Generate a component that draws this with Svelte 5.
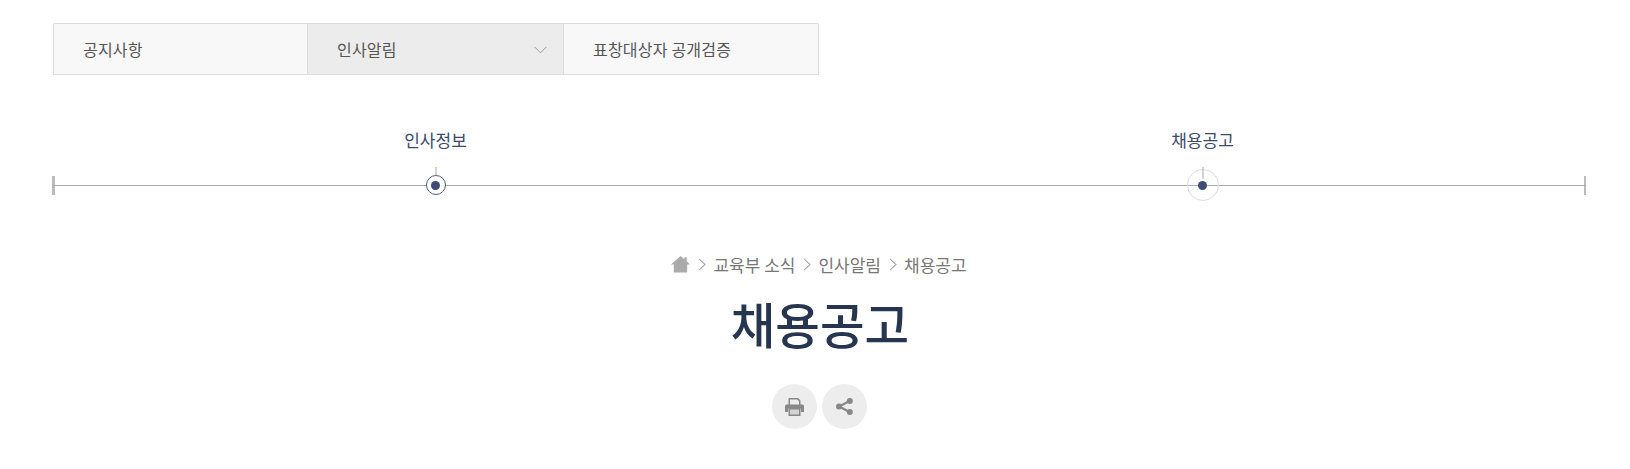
<script>
	const tabs = [
		{ label: '공지사항' },
		{ label: '인사알림', active: true },
		{ label: '표창대상자 공개검증' }
	];
	const steps = [
		{ label: '인사정보', current: true },
		{ label: '채용공고' }
	];
	const crumbs = ['교육부 소식', '인사알림', '채용공고'];
</script>

<div class="page">
	<nav class="tabs">
		{#each tabs as tab}
			<a class="tab" class:active={tab.active} href="#top">
				{tab.label}
				{#if tab.active}
					<svg class="caret" width="13" height="8" viewBox="0 0 13 8" fill="none">
						<path d="M.5.8 6.500 6.800 12.500.8" stroke="#999" />
					</svg>
				{/if}
			</a>
		{/each}
	</nav>

	<div class="timeline">
		{#each steps as step}
			<div class="step">
				<span class="step-label">{step.label}</span>
				<div class="slot">
					<span class="node" class:current={step.current}><i></i></span>
				</div>
			</div>
		{/each}
	</div>

	<div class="heading">
		<div class="crumbs">
			<svg width="19" height="18" viewBox="0 0 20 18">
				<path d="M10 .5 14 4V2h2.500v4.200L20 9.500h-3V18H3V9.500H0z" fill="#aaa" />
			</svg>
			{#each crumbs as crumb}
				<svg class="sep" width="8" height="13" viewBox="0 0 8 13" fill="none">
					<path d="M1 .8 7 6.500 1 12.200" stroke="#aaa" stroke-width="1.100" />
				</svg>
				<span>{crumb}</span>
			{/each}
		</div>
		<h1>채용공고</h1>
		<div class="actions">
			<button aria-label="인쇄">
				<svg width="19" height="18" viewBox="0 0 19 18">
					<path fill="#888" d="M3.500 0H13l2.500 2.500V7H14V3.200L12.300 1.500H5V7H3.500z" />
					<path fill="#888" d="M1.500 6.500h16A1.500 1.500 0 0 1 19 8v6h-3v-3.500H3V14H0V8a1.500 1.500 0 0 1 1.500-1.500z" />
					<rect x="3.500" y="10" width="12" height="8" fill="#888" />
					<rect x="5" y="11.500" width="9" height="5" fill="#d4d4d4" />
				</svg>
			</button>
			<button aria-label="공유">
				<svg width="17" height="17" viewBox="0 0 17 17">
					<path d="M13.500 3 3.200 8.500l10.300 5.500" fill="none" stroke="#888" stroke-width="2.200" />
					<circle cx="13.800" cy="3" r="3" fill="#888" />
					<circle cx="3" cy="8.500" r="3" fill="#888" />
					<circle cx="13.800" cy="14" r="3" fill="#888" />
				</svg>
			</button>
		</div>
	</div>
</div>

<style>
	:global(body) {
		margin: 0;
		background: #fff;
	}
	.page {
		padding: 23px 44px 0 52px;
		font-family: 'Noto Sans CJK KR', 'Noto Sans', sans-serif;
		color: #444;
	}
	.tabs {
		display: grid;
		grid-template-columns: 253px 257px 1fr;
		width: 766px;
		height: 52px;
		margin-left: 1px;
		box-sizing: border-box;
		border: 1px solid #ddd;
		background: #f8f8f8;
	}
	.tab {
		display: flex;
		align-items: center;
		justify-content: space-between;
		padding: 0 16px 0 29px;
		font-size: 16px;
		letter-spacing: 0.2px;
		color: #555;
		text-decoration: none;
	}
	.tab.active {
		background: #ececec;
		border-left: 1px solid #ddd;
		border-right: 1px solid #ddd;
	}
	.caret {
		margin-top: 2px;
	}
	.timeline {
		display: grid;
		grid-template-columns: 1fr 1fr;
		margin-top: 53px;
		background:
			linear-gradient(#aaa, #aaa) 0 57px / 100% 1px no-repeat,
			linear-gradient(#bbb, #bbb) 0 48px / 3px 19px no-repeat,
			linear-gradient(#bbb, #bbb) 100% 48px / 2px 19px no-repeat;
	}
	.step {
		display: flex;
		flex-direction: column;
		align-items: center;
	}
	.step-label {
		font-size: 17px;
		line-height: 24px;
		color: #3b4a6b;
	}
	.slot {
		display: flex;
		align-items: center;
		justify-content: center;
		height: 32px;
		margin-top: 17px;
	}
	.node {
		position: relative;
		display: flex;
		align-items: center;
		justify-content: center;
		box-sizing: border-box;
		width: 32px;
		height: 32px;
		border: 1px solid #dcdee6;
		border-radius: 50%;
	}
	.node::before {
		content: '';
		position: absolute;
		left: 50%;
		top: -3px;
		width: 1px;
		height: 12px;
		background: #aaa;
		transform: translateX(-0.5px);
	}
	.node i {
		position: relative;
		width: 9px;
		height: 9px;
		border-radius: 50%;
		background: #3f4c75;
	}
	.node.current {
		width: 20px;
		height: 20px;
		border-color: #4f5c80;
		background: #fff;
	}
	.node.current::before {
		top: -9px;
		height: 8px;
	}
	.heading {
		display: flex;
		flex-direction: column;
		align-items: center;
		margin-top: 50px;
	}
	.crumbs {
		display: flex;
		align-items: center;
		gap: 7.500px;
		height: 26px;
		font-size: 17px;
		color: #777;
	}
	h1 {
		margin: 13px 0 0;
		padding-left: 2px;
		font-size: 48.500px;
		line-height: 66px;
		font-weight: 500;
		color: #263550;
	}
	.actions {
		display: flex;
		gap: 5px;
		margin-top: 28px;
	}
	.actions button {
		display: flex;
		align-items: center;
		justify-content: center;
		width: 45px;
		height: 45px;
		padding: 0;
		border: 0;
		border-radius: 50%;
		background: #ededed;
	}
</style>
